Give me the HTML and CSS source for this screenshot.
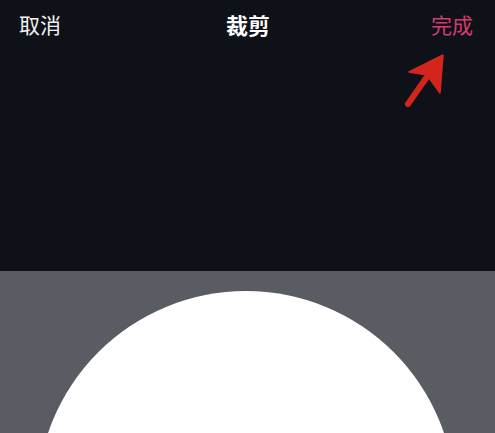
FILE: index.html
```html
<!DOCTYPE html>
<html lang="zh">
<head>
<meta charset="utf-8">
<link rel="stylesheet" href="styles.css">
</head>
<body>
<div class="screen">
  <section class="top">
    <header class="bar">
      <span class="btn cancel">取消</span>
      <span class="title">裁剪</span>
      <span class="btn done">完成</span>
    </header>
    <svg class="arrow" width="50" height="60" viewBox="0 0 50 60">
      <path d="M4 55 L27 22" stroke="#d2261c" stroke-width="6" stroke-linecap="round" fill="none"/>
      <path d="M39 6 L5 23 L23 26 L36 44 Z" fill="#d2261c" stroke="#d2261c" stroke-width="1.5" stroke-linejoin="round"/>
    </svg>
  </section>
  <section class="stage">
    <div class="circle"></div>
  </section>
</div>
</body>
</html>
```
FILE: styles.css
```css
html, body {
  margin: 0;
  padding: 0;
  background: #0f1119;
}
.screen {
  width: 495px;
  height: 433px;
  overflow: hidden;
  display: flex;
  flex-direction: column;
  font-family: "Noto Sans CJK SC", "Noto Sans", sans-serif;
}
.top {
  position: relative;
  height: 271px;
  background: #0f1119;
}
.bar {
  display: flex;
  justify-content: space-between;
  align-items: center;
  padding: 9px 22px 0 19px;
  height: 30px;
}
.btn {
  font-size: 21px;
  line-height: 30px;
}
.cancel {
  color: #f2f2f2;
}
.done {
  color: #d43b6c;
}
.title {
  font-size: 22px;
  font-weight: 700;
  line-height: 30px;
  color: #ffffff;
  margin-left: 4px;
}
.arrow {
  position: absolute;
  left: 404px;
  top: 49px;
}
.stage {
  flex: 1;
  background: #5a5c63;
  display: flex;
  justify-content: center;
  padding-top: 20px;
  overflow: hidden;
}
.circle {
  flex: none;
  width: 418px;
  height: 418px;
  border-radius: 50%;
  background: #ffffff;
  margin-right: 3px;
}
```
